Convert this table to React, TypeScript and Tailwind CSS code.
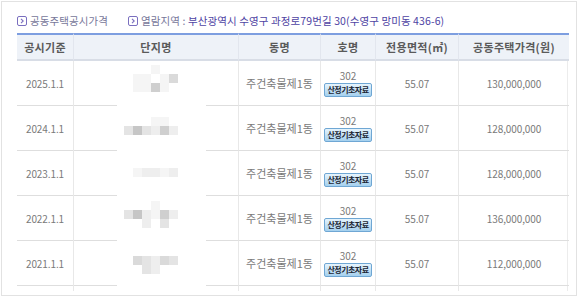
import React from "react";

const shade: Record<string, string> = {
  _: "bg-transparent",
  a: "bg-[#f5f5f5]",
  b: "bg-[#eeeeee]",
  c: "bg-[#e4e4e4]",
  d: "bg-[#dadada]",
  e: "bg-[#cfcfcf]",
  f: "bg-[#c6c6c6]",
};

const rows = [
  {
    year: "2025.1.1",
    price: "130,000,000",
    mosaic: ["__a__", "aa_ad", "aaea_"],
    pad: "pt-[4px] pl-[59px]",
  },
  {
    year: "2024.1.1",
    price: "128,000,000",
    mosaic: ["___aa_", "cfcbeb"],
    pad: "pt-[11px] pl-[50px]",
  },
  {
    year: "2023.1.1",
    price: "128,000,000",
    mosaic: ["abbab"],
    pad: "pt-[17px] pl-[59px]",
  },
  {
    year: "2022.1.1",
    price: "136,000,000",
    mosaic: ["___a__", "cfbaeb", "__b_c_"],
    pad: "pt-[5px] pl-[50px]",
  },
  {
    year: "2021.1.1",
    price: "112,000,000",
    mosaic: ["dcbdc", "_cb__"],
    pad: "pt-[15px] pl-[59px]",
  },
];

const Chevron = () => (
  <svg width="10" height="10" viewBox="0 0 10 10" className="shrink-0">
    <rect x="0.5" y="0.5" width="9" height="9" rx="1.5" fill="#fff" stroke="#7a6fbf" />
    <path d="M4 2.8 L6.2 5 L4 7.2" fill="none" stroke="#7a6fbf" strokeWidth="1.1" />
  </svg>
);

const Mosaic = ({ grid }: { grid: string[] }) => (
  <div className="flex flex-col">
    {grid.map((line, i) => (
      <div key={i} className="flex">
        {line.split("").map((k, j) => (
          <div key={j} className={"w-[9px] h-[9px] " + shade[k]} />
        ))}
      </div>
    ))}
  </div>
);

const cell = "flex items-center justify-center border-b border-[#dedede] border-l border-l-[#e8e8e8]";
const num = "text-[10px] tracking-[-0.1px]";

export default function App() {
  return (
    <div
      className="w-[580px] h-[297px] bg-white text-[#7a7a7a] overflow-hidden"
      style={{ fontFamily: '"Noto Sans CJK KR", "Noto Sans", sans-serif' }}
    >
      <div className="ml-[1px] mt-[1px] w-[576px] h-[295px] border border-[#e2e2e2] pl-[15px] pr-[8px] pt-[6px]">
        <div className="h-[25px] flex items-center gap-[3px] text-[10.5px] tracking-[0.1px] text-[#77779a]">
          <Chevron />
          <span>공동주택공시가격</span>
          <span className="ml-[14px]" />
          <Chevron />
          <span>
            열람지역 : <span className="text-[#4e43a3]">부산광역시 수영구 과정로79번길 30(수영구 망미동 436-6)</span>
          </span>
        </div>

        <div className="grid grid-cols-[56px_165px_82px_55px_83px_111px] border-r border-[#ececec] text-[11px]">
          {["공시기준", "단지명", "동명", "호명", "전용면적(㎡)", "공동주택가격(원)"].map((h, i) => (
            <div
              key={h}
              className={
                "h-[28px] flex items-center justify-center bg-[#eef2f8] border-t-2 border-t-[#7d9ee0] border-b-2 border-b-[#d8dde6] font-bold text-[#5a5a5a] tracking-[0.3px] " +
                (i > 0 ? "border-l border-l-[#e2e6ee]" : "")
              }
            >
              {h}
            </div>
          ))}

          {rows.map((r) => (
            <React.Fragment key={r.year}>
              <div className={"h-[45px] flex items-center justify-center border-b border-[#dedede] " + num}>{r.year}</div>
              <div className="h-[45px] flex flex-col border-l border-[#e8e8e8]">
                <div className={"flex-1 " + r.pad}>
                  <Mosaic grid={r.mosaic} />
                </div>
                <div className="flex h-[1px]">
                  <div className="w-[43px] bg-[#dedede]" />
                  <div className="w-[89px]" />
                  <div className="flex-1 bg-[#dedede]" />
                </div>
              </div>
              <div className={"h-[45px] " + cell}>주건축물제1동</div>
              <div className={"h-[45px] flex-col gap-[1px] pt-[1px] " + cell}>
                <span className={"leading-[12px] " + num}>302</span>
                <span className="w-[48px] h-[14px] flex items-center justify-center overflow-hidden whitespace-nowrap rounded-[2px] border border-[#6fa7d4] bg-gradient-to-b from-[#e6f4fd] to-[#a4d0ee] text-[8px] font-bold text-[#1c2633] tracking-[-0.5px] leading-none">
                  산정기초자료
                </span>
              </div>
              <div className={"h-[45px] " + cell + " " + num}>55.07</div>
              <div className={"h-[45px] " + cell + " " + num}>{r.price}</div>
            </React.Fragment>
          ))}

          {[0, 1, 2, 3, 4, 5].map((i) => (
            <div key={i} className={"h-[5px] " + (i > 0 ? "border-l border-[#e8e8e8]" : "")} />
          ))}
        </div>
      </div>
    </div>
  );
}
